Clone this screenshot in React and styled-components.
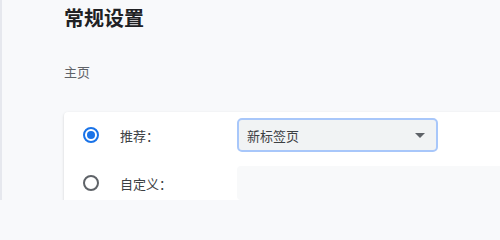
import styled, { createGlobalStyle } from 'styled-components';

const GlobalStyle = createGlobalStyle`
  html, body {
    margin: 0;
    padding: 0;
    background: #f8f9fb;
    font-family: "Noto Sans CJK SC", "Noto Sans", sans-serif;
  }
`;

const Page = styled.div`
  width: 500px;
  height: 200px;
  overflow: hidden;
  box-sizing: border-box;
  border-left: 2px solid #e6e8ee;
  padding: 4px 0 0 62px;
`;

const Title = styled.h1`
  margin: 0;
  font-size: 20px;
  font-weight: 700;
  line-height: 28px;
  color: #202124;
`;

const SectionLabel = styled.div`
  margin-top: 30px;
  font-size: 13px;
  line-height: 20px;
  color: #5f6368;
`;

const Card = styled.div`
  margin-top: 30px;
  width: 460px;
  height: 140px;
  background: #fff;
  border-radius: 4px 0 0 0;
  box-shadow: 0 1px 3px rgba(60, 64, 67, 0.15), 0 1px 2px rgba(60, 64, 67, 0.08);
  padding: 6px 0 0 19px;
  display: flex;
  flex-direction: column;
  gap: 14px;
`;

const Row = styled.label`
  display: flex;
  align-items: center;
  height: 34px;
`;

const Radio = styled.span`
  width: 16px;
  height: 16px;
  box-sizing: border-box;
  border-radius: 50%;
  border: 2px solid ${(p) => (p.checked ? '#1a73e8' : '#5f6368')};
  display: flex;
  align-items: center;
  justify-content: center;
  flex: none;

  &::after {
    content: '';
    width: 8px;
    height: 8px;
    border-radius: 50%;
    background: #1a73e8;
    display: ${(p) => (p.checked ? 'block' : 'none')};
  }
`;

const Label = styled.span`
  margin-left: 21px;
  width: 117px;
  font-size: 13px;
  color: #3c4043;
`;

const Select = styled.div`
  width: 201px;
  height: 34px;
  box-sizing: border-box;
  border: 2px solid #a8c7fa;
  border-radius: 5px;
  background: #f1f3f4;
  display: flex;
  align-items: center;
  justify-content: space-between;
  padding: 0 11px 0 8px;
  font-size: 13px;
  color: #3c4043;
`;

const Caret = styled.span`
  width: 0;
  height: 0;
  border-left: 5px solid transparent;
  border-right: 5px solid transparent;
  border-top: 5px solid #5f6368;
`;

const Input = styled.div`
  flex: 1;
  height: 34px;
  border-radius: 4px;
  background: #f8f9fa;
`;

export default function App() {
  return (
    <>
      <GlobalStyle />
      <Page>
        <Title>常规设置</Title>
        <SectionLabel>主页</SectionLabel>
        <Card>
          <Row>
            <Radio checked />
            <Label>推荐：</Label>
            <Select>
              新标签页
              <Caret />
            </Select>
          </Row>
          <Row>
            <Radio />
            <Label>自定义：</Label>
            <Input />
          </Row>
        </Card>
      </Page>
    </>
  );
}
